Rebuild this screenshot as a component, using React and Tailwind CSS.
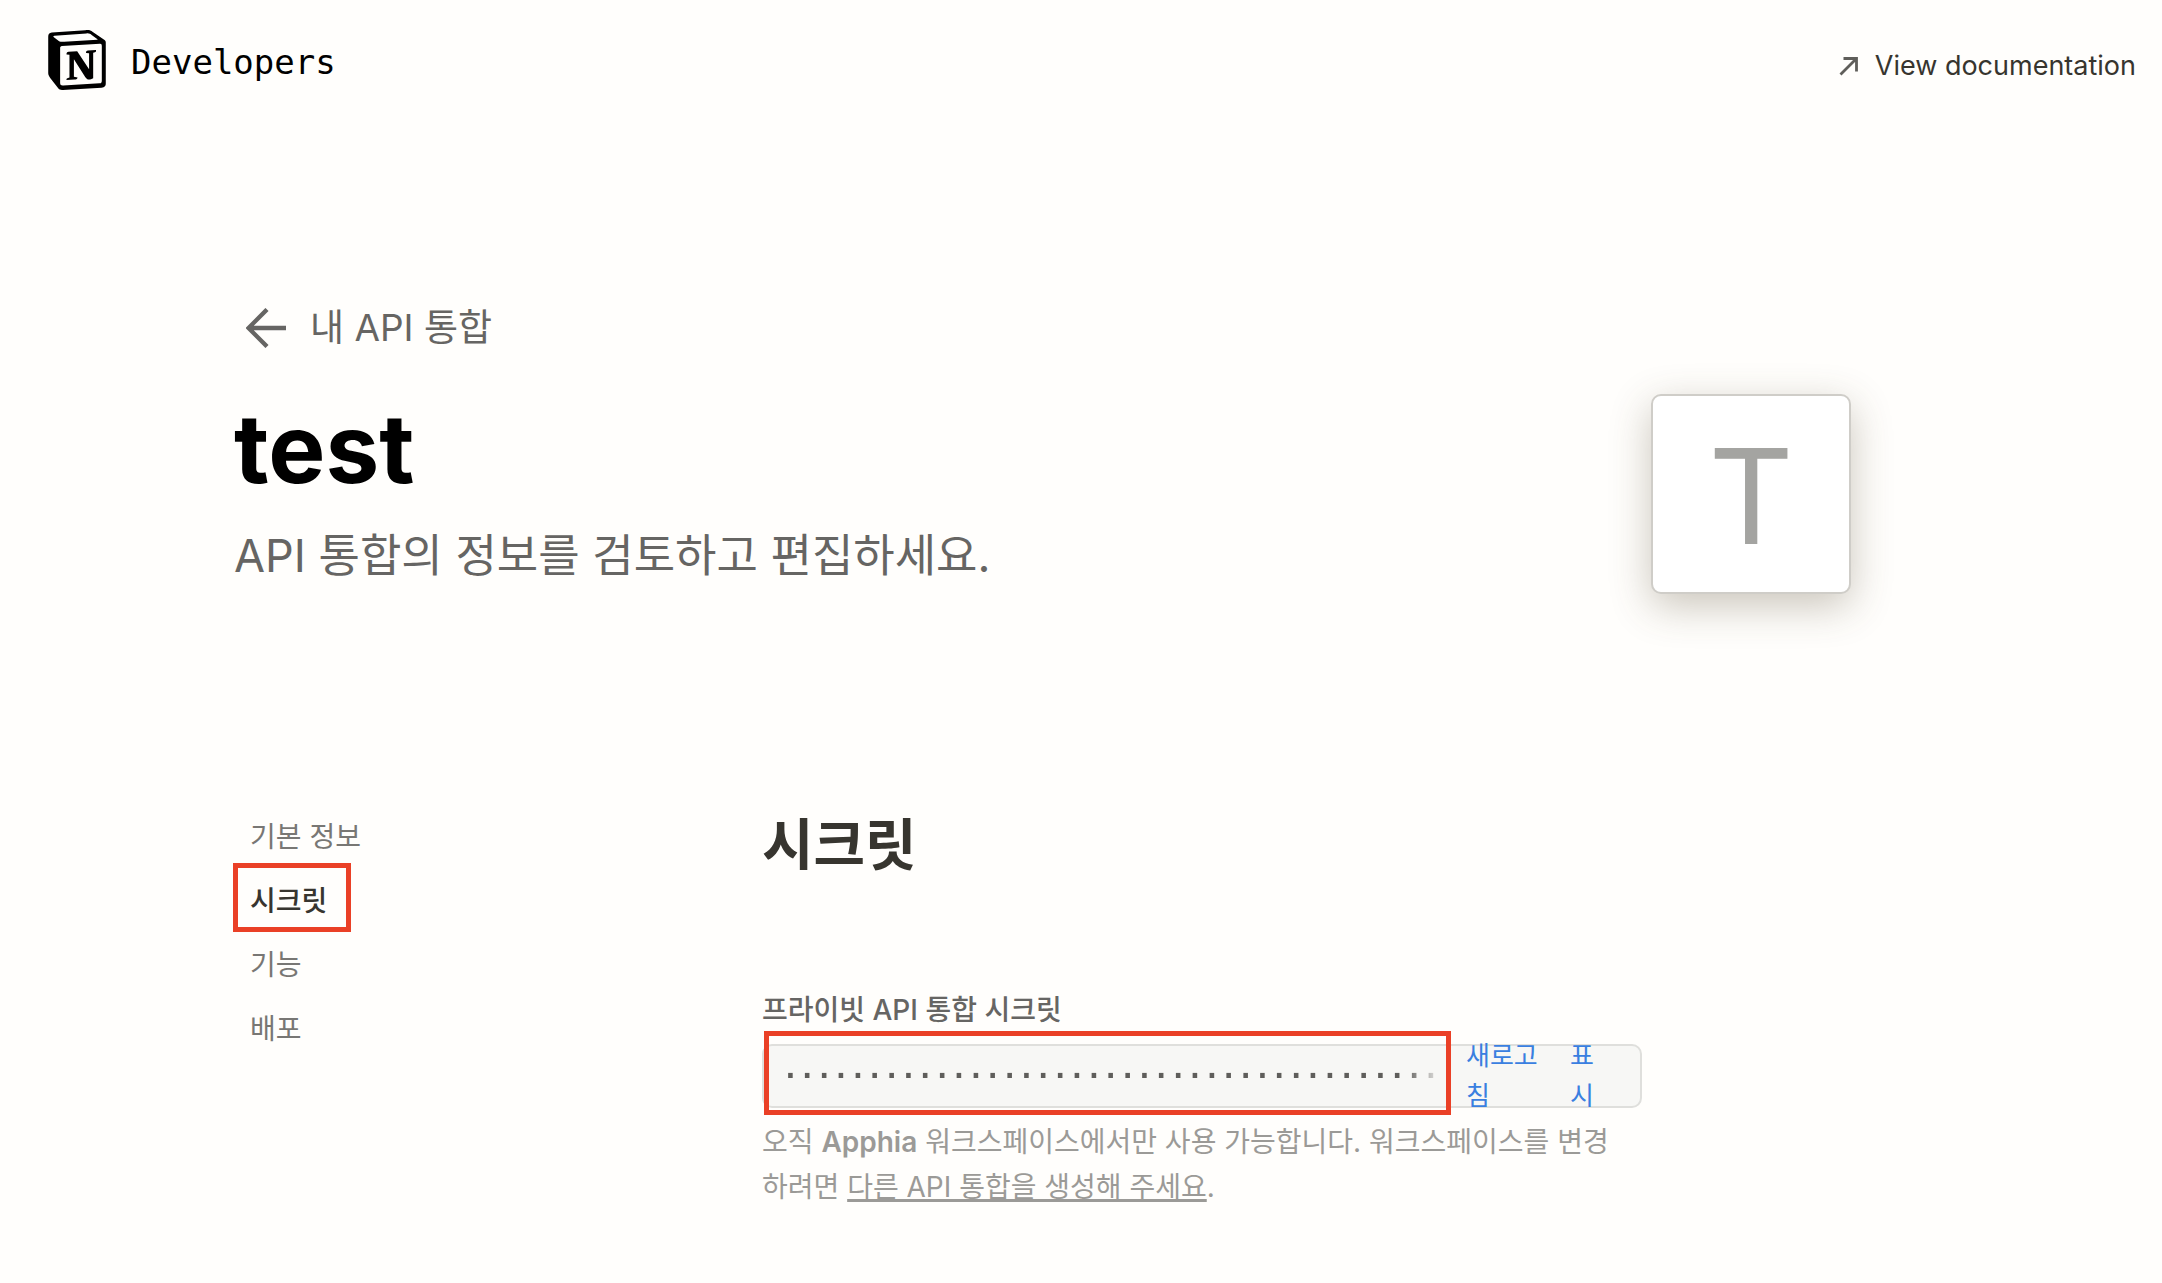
import React, { useState } from "react";
import { SiNotion } from "react-icons/si";

const SECTIONS = [
  { id: "basic", label: "기본 정보" },
  { id: "secrets", label: "시크릿" },
  { id: "capabilities", label: "기능" },
  { id: "distribution", label: "배포" },
];

const MASKED_SECRET = "·".repeat(50);

function Header() {
  return (
    <header className="flex items-center justify-between pl-[47px] pr-[26px] pt-[30px]">
      <a href="#home" className="flex items-center gap-6 text-black">
        <SiNotion className="size-[60px]" aria-hidden="true" />
        <span className="pt-1 font-['DejaVu_Sans_Mono',monospace] text-[34px] leading-10">
          Developers
        </span>
      </a>
      <a href="#docs" className="flex items-center gap-4 pt-3 text-[#37352f]">
        <svg
          viewBox="0 0 20 20"
          className="size-5 text-[#5f5e5a]"
          fill="none"
          stroke="currentColor"
          strokeWidth="2.8"
          aria-hidden="true"
        >
          <path d="M1.5 18.5 17.5 2.5M4.5 2.5H17.5V15.5" />
        </svg>
        <span className="text-[27px] leading-10">View documentation</span>
      </a>
    </header>
  );
}

function IntegrationHeading() {
  return (
    <div className="flex items-end justify-between">
      <div>
        <a href="#integrations" className="flex items-center gap-6 pl-3 text-[37px] leading-[48px] text-[#666563]">
          <svg
            viewBox="0 0 40 40"
            className="size-10"
            fill="none"
            stroke="currentColor"
            strokeWidth="4.4"
            aria-hidden="true"
          >
            <path d="M21 1.5 2.5 20 21 38.5M3 20H40" />
          </svg>
          내 API 통합
        </a>
        <h1 className="mt-10 text-[96px] font-bold leading-[112px] text-black">test</h1>
        <p className="mt-5 text-[45px] leading-[64px] text-[#666563]">
          API 통합의 정보를 검토하고 편집하세요.
        </p>
      </div>
      <div className="-mb-1.5 flex size-[200px] shrink-0 items-center justify-center rounded-[10px] border-2 border-[#cfcdc8] bg-white pt-1 text-[132px] leading-none text-[#a4a4a1] shadow-[0_12px_40px_rgba(80,65,40,0.3)]">
        T
      </div>
    </div>
  );
}

function Sidebar({ active, onSelect }) {
  return (
    <nav className="w-[528px] shrink-0">
      <ul>
        {SECTIONS.map((section) => (
          <li key={section.id} className="relative flex h-16 items-center">
            <button
              type="button"
              onClick={() => onSelect(section.id)}
              className={`px-4 text-[28px] leading-10 ${
                active === section.id ? "font-medium text-[#37352f]" : "text-[#787774]"
              }`}
            >
              {section.label}
            </button>
            {section.id === "secrets" && (
              <span className="pointer-events-none absolute -left-px -top-1.5 h-[69px] w-[118px] border-5 border-[#ea4026]" />
            )}
          </li>
        ))}
      </ul>
    </nav>
  );
}

function SecretField() {
  return (
    <div>
      <label htmlFor="secret" className="block text-[28px] font-medium leading-10 text-[#666563]">
        프라이빗 API 통합 시크릿
      </label>
      <div className="relative mt-[14px] flex h-16 items-center rounded-[10px] border-2 border-[#dfdfdc] bg-[#f7f7f5] pl-[18px] pr-9">
        <input
          id="secret"
          type="text"
          readOnly
          value={MASKED_SECRET}
          className="h-10 min-w-0 flex-1 bg-transparent font-['DejaVu_Sans_Mono',monospace] text-[28px] font-bold text-[#5f5e5b] outline-none mask-r-from-[94%] mask-r-to-[100%]"
        />
        <button type="button" className="ml-[22px] w-20 text-left text-[26px] leading-10 text-[#3a7fe0]">
          새로고침
        </button>
        <button type="button" className="ml-6 w-[34px] text-left text-[26px] leading-10 text-[#3a7fe0]">
          표시
        </button>
        <span className="pointer-events-none absolute -top-[15px] bottom-[-9px] left-0 right-[189px] border-5 border-[#ea4026]" />
      </div>
      <p className="mt-3 pr-4 text-[28px] leading-[45px] text-[#9b9a97]">
        오직 <strong className="font-semibold">Apphia</strong> 워크스페이스에서만 사용 가능합니다. 워크스페이스를 변경하려면{" "}
        <a href="#new" className="underline decoration-3">
          다른 API 통합을 생성해 주세요
        </a>
        .
      </p>
    </div>
  );
}

export default function App() {
  const [active, setActive] = useState("secrets");

  return (
    <div
      lang="ko"
      className="min-h-screen bg-[#fffefc] font-['Inter','Noto_Sans_CJK_KR',sans-serif] text-[#37352f]"
    >
      <Header />
      <main className="pb-12 pl-[234px] pr-[311px] pt-[214px]">
        <IntegrationHeading />
        <div className="mt-[217px] flex">
          <Sidebar active={active} onSelect={setActive} />
          <section className="w-full max-w-[880px] pt-1">
            <h2 className="text-[56px] font-bold leading-[72px]">시크릿</h2>
            <div className="mt-[109px]">
              <SecretField />
            </div>
          </section>
        </div>
      </main>
    </div>
  );
}
